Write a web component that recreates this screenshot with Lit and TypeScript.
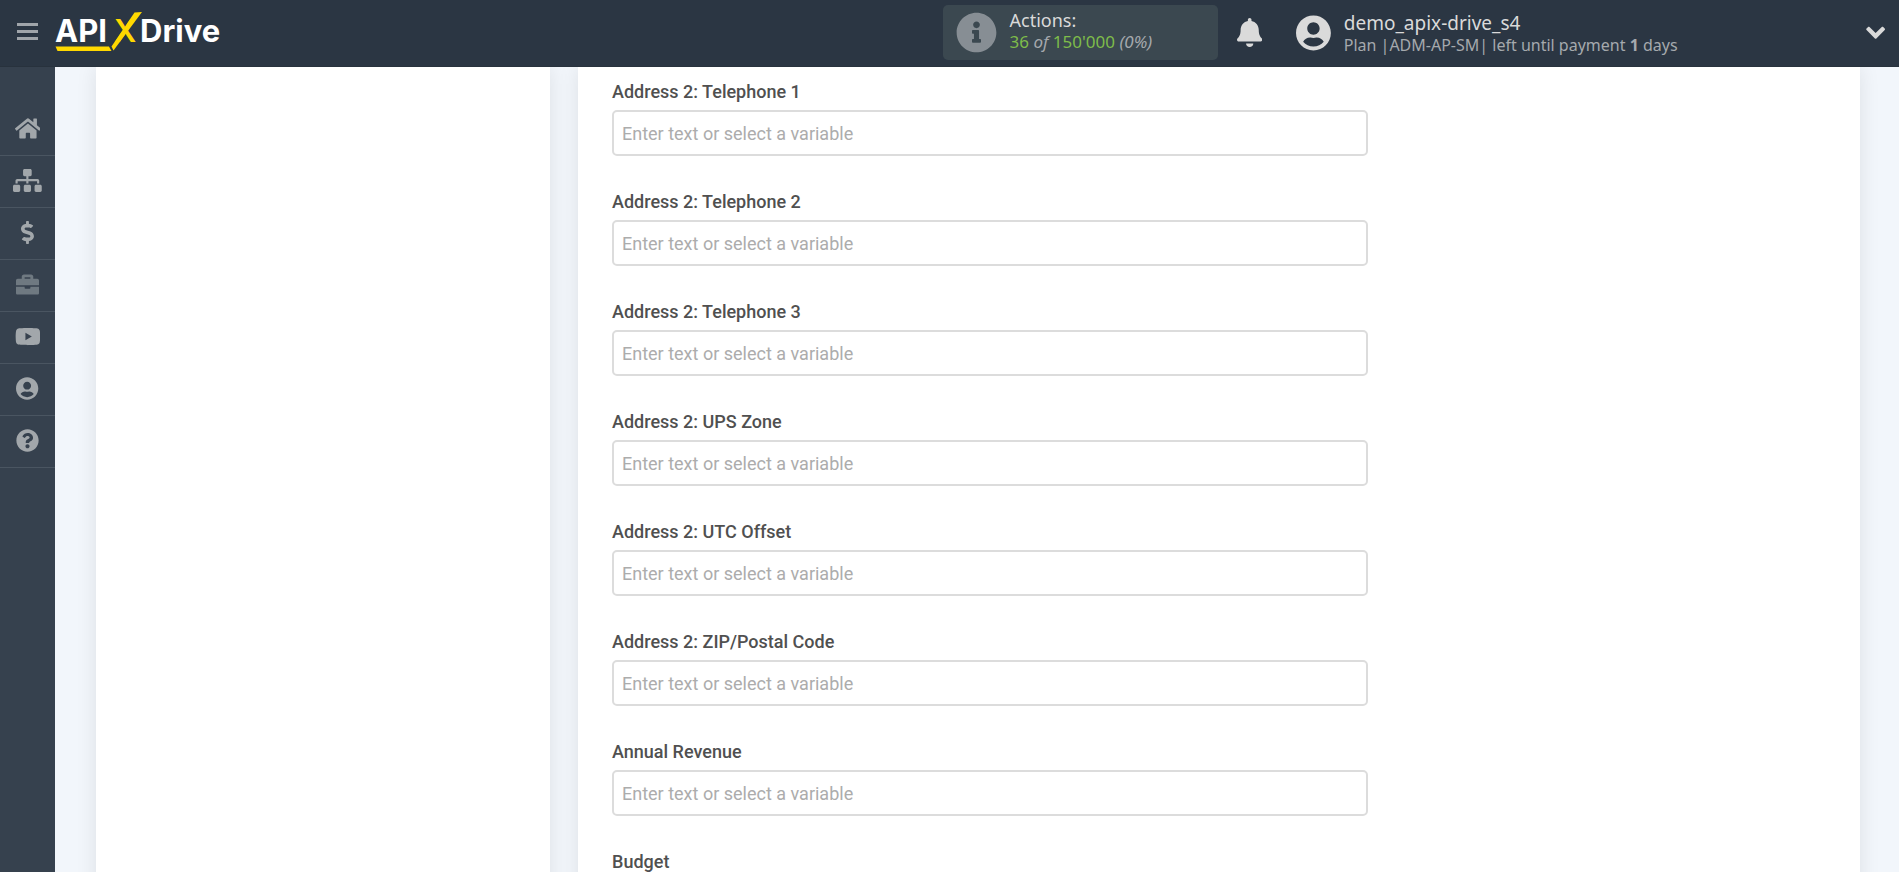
import { LitElement, html, css, svg } from "lit";
import { customElement } from "lit/decorators.js";
import { classMap } from "lit/directives/class-map.js";

interface Glyph {
  width: number;
  path: string;
}

const glyphs: Record<string, Glyph> = {
  home: {
    width: 576,
    path: "M280.37 148.26L96 300.11V464a16 16 0 0 0 16 16l112.06-.29a16 16 0 0 0 15.92-16V368a16 16 0 0 1 16-16h64a16 16 0 0 1 16 16v95.64a16 16 0 0 0 16 16.05L464 480a16 16 0 0 0 16-16V300L295.67 148.26a12.19 12.19 0 0 0-15.3 0zM571.6 251.47L488 182.56V44.05a12 12 0 0 0-12-12h-56a12 12 0 0 0-12 12v72.61L318.47 43a48 48 0 0 0-61 0L4.34 251.47a12 12 0 0 0-1.6 16.9l25.5 31A12 12 0 0 0 45.15 301l235.22-193.74a12.19 12.19 0 0 1 15.3 0L530.9 301a12 12 0 0 0 16.9-1.6l25.5-31a12 12 0 0 0-1.7-16.93z",
  },
  sitemap: {
    width: 640,
    path: "M128 352H32c-17.67 0-32 14.33-32 32v96c0 17.67 14.33 32 32 32h96c17.67 0 32-14.33 32-32v-96c0-17.67-14.33-32-32-32zm-24-80h192v48h48v-48h192v48h48v-57.59c0-21.17-17.23-38.41-38.41-38.41H344v-64h40c17.67 0 32-14.33 32-32V32c0-17.67-14.33-32-32-32H256c-17.67 0-32 14.33-32 32v96c0 17.67 14.33 32 32 32h40v64H94.41C73.23 224 56 241.23 56 262.41V320h48v-48zm264 80h-96c-17.67 0-32 14.33-32 32v96c0 17.67 14.33 32 32 32h96c17.67 0 32-14.33 32-32v-96c0-17.67-14.33-32-32-32zm240 0h-96c-17.67 0-32 14.33-32 32v96c0 17.67 14.33 32 32 32h96c17.67 0 32-14.33 32-32v-96c0-17.67-14.33-32-32-32z",
  },
  dollar: {
    width: 288,
    path: "M209.2 233.4l-108-31.6C88.7 198.2 80 186.5 80 173.5c0-16.3 13.2-29.5 29.5-29.5h66.3c12.2 0 24.2 3.7 34.2 10.5 6.1 4.1 14.3 3.1 19.5-2l34.8-34c7.1-6.9 6.1-18.4-1.8-24.5C238 74.8 207.4 64.1 176 64V16c0-8.8-7.2-16-16-16h-32c-8.8 0-16 7.2-16 16v48h-2.5C45.8 64-5.4 118.7.5 183.6c4.2 46.1 39.4 83.6 83.8 96.6l102.5 30c12.5 3.7 21.2 15.3 21.2 28.3 0 16.3-13.2 29.5-29.5 29.5h-66.3C100 368 88 364.3 78 357.5c-6.1-4.1-14.3-3.1-19.5 2l-34.8 34c-7.1 6.9-6.1 18.4 1.8 24.5 24.5 19.2 55.1 29.9 86.5 30v48c0 8.8 7.2 16 16 16h32c8.8 0 16-7.2 16-16v-48.2c46.6-.9 90.3-28.6 105.7-72.7 21.5-61.6-14.6-124.8-72.5-141.7z",
  },
  briefcase: {
    width: 512,
    path: "M320 336c0 8.84-7.16 16-16 16h-96c-8.84 0-16-7.16-16-16v-32H0v144c0 18 14 32 32 32h448c18 0 32-14 32-32V304H320v32zm152-208h-88V80c0-25.600-22.400-48-48-48H176c-25.600 0-48 22.400-48 48v48H40c-22 0-40 18-40 40v104h512v-104c0-22-18-40-40-40zm-152 0H192V96h128v32z",
  },
  video: {
    width: 576,
    path: "M549.655 124.083c-6.281-23.65-24.787-42.276-48.284-48.597C458.781 64 288 64 288 64S117.22 64 74.629 75.486c-23.497 6.322-42.003 24.947-48.284 48.597-11.412 42.867-11.412 132.305-11.412 132.305s0 89.438 11.412 132.305c6.281 23.65 24.787 41.5 48.284 47.821C117.22 448 288 448 288 448s170.78 0 213.371-11.486c23.497-6.321 42.003-24.171 48.284-47.821 11.412-42.867 11.412-132.305 11.412-132.305s0-89.438-11.412-132.305zM232.145 337.591V175.185l142.739 81.205-142.739 81.201z",
  },
  user: {
    width: 496,
    path: "M248 8C111 8 0 119 0 256s111 248 248 248 248-111 248-248S385 8 248 8zm0 96c48.6 0 88 39.4 88 88s-39.4 88-88 88-88-39.4-88-88 39.4-88 88-88zm0 344c-58.7 0-111.3-26.6-146.5-68.2 18.8-35.4 55.6-59.8 98.5-59.8 2.4 0 4.8.4 7.1 1.1 13 4.2 26.6 6.9 40.9 6.9 14.3 0 28-2.7 40.9-6.9 2.3-.7 4.7-1.1 7.1-1.1 42.9 0 79.7 24.4 98.5 59.8C359.3 421.4 306.7 448 248 448z",
  },
  question: {
    width: 512,
    path: "M504 256c0 136.997-111.043 248-248 248S8 392.997 8 256C8 119.083 119.043 8 256 8s248 111.083 248 248zM262.655 90c-54.497 0-89.255 22.957-116.549 63.758-3.536 5.286-2.353 12.415 2.715 16.258l34.699 26.31c5.205 3.947 12.621 3.008 16.665-2.122 17.864-22.658 30.113-35.797 57.303-35.797 20.429 0 45.698 13.148 45.698 32.958 0 14.976-12.363 22.667-32.534 33.976C247.128 238.528 216 254.941 216 296v4c0 6.627 5.373 12 12 12h56c6.627 0 12-5.373 12-12v-1.333c0-28.462 83.186-29.647 83.186-106.667 0-58.002-60.165-102-116.531-102zM256 338c-25.365 0-46 20.635-46 46 0 25.364 20.635 46 46 46s46-20.636 46-46c0-25.365-20.635-46-46-46z",
  },
  info: {
    width: 512,
    path: "M256 8C119.043 8 8 119.083 8 256c0 136.997 111.043 248 248 248s248-111.003 248-248C504 119.083 392.957 8 256 8zm0 110c23.196 0 42 18.804 42 42s-18.804 42-42 42-42-18.804-42-42 18.804-42 42-42zm56 254c0 6.627-5.373 12-12 12h-88c-6.627 0-12-5.373-12-12v-24c0-6.627 5.373-12 12-12h12v-64h-12c-6.627 0-12-5.373-12-12v-24c0-6.627 5.373-12 12-12h64c6.627 0 12 5.373 12 12v100h12c6.627 0 12 5.373 12 12v24z",
  },
  bell: {
    width: 448,
    path: "M224 512c35.32 0 63.97-28.65 63.97-64H160.03c0 35.35 28.65 64 63.97 64zm215.39-149.71c-19.32-20.76-55.47-51.99-55.47-154.29 0-77.7-54.48-139.9-127.94-155.16V32c0-17.67-14.32-32-31.98-32s-31.98 14.33-31.98 32v20.84C118.56 68.1 64.08 130.3 64.08 208c0 102.3-36.15 133.53-55.47 154.29-6 6.45-8.66 14.16-8.61 21.71.11 16.4 12.98 32 32.1 32h383.8c19.12 0 32-15.6 32.1-32 .05-7.55-2.61-15.27-8.61-21.71z",
  },
  chevron: {
    width: 448,
    path: "M207.029 381.476L12.686 187.132c-9.373-9.373-9.373-24.569 0-33.941l34.667-34.667c9.357-9.357 24.522-9.375 33.901-.04L224 258.505l142.745-140.021c9.379-9.335 24.544-9.317 33.901.04l34.667 34.667c9.373 9.373 9.373 24.569 0 33.941L240.971 381.476c-9.373 9.372-24.569 9.372-33.942 0z",
  },
};

const icon = (name: string) => html`
  <svg class="icon" viewBox="0 0 ${glyphs[name].width} 512" aria-hidden="true">
    ${svg`<path fill="currentColor" d=${glyphs[name].path}></path>`}
  </svg>
`;

const iconStyles = css`
  .icon {
    display: block;
    height: 1em;
    width: auto;
  }
`;

@customElement("app-header")
class AppHeader extends LitElement {
  static styles = [
    iconStyles,
    css`
      :host {
        box-sizing: border-box;
        display: grid;
        grid-template-columns: minmax(0, 1fr) minmax(0, 1fr);
        align-items: center;
        height: 67px;
        padding: 0 14px 2px 0;
        box-shadow: inset 0 -1px #28323d;
        background: #2b3643;
        color: #dadada;
        font-family: "Noto Sans", "Open Sans", sans-serif;
      }
      button {
        padding: 0;
        border: 0;
        background: none;
        color: inherit;
        font: inherit;
        text-align: left;
        cursor: pointer;
      }
      .brand,
      .tools,
      .account {
        display: flex;
        align-items: center;
      }
      .brand {
        padding-left: 17px;
        gap: 17px;
      }
      .burger {
        display: grid;
        gap: 4px;
        width: 21px;
        margin-bottom: 2px;
        color: #a0a5aa;
      }
      .bar {
        height: 3px;
        background: currentColor;
      }
      .logo {
        display: block;
      }
      .letters {
        font: 700 31px Inter, sans-serif;
      }
      .cross {
        font: 600 31px Inter, sans-serif;
      }
      .actions {
        box-sizing: border-box;
        display: flex;
        align-items: center;
        gap: 13px;
        flex: 0 0 275px;
        height: 55px;
        padding-left: 13px;
        border-radius: 5px;
        background: #3b4850;
      }
      .actions .lines {
        padding-bottom: 3px;
      }
      .info {
        color: #878e94;
        font-size: 41px;
      }
      .lines {
        display: block;
      }
      .title {
        display: block;
        font-size: 18px;
        line-height: 22px;
      }
      .detail {
        display: block;
        font-size: 17px;
        line-height: 22px;
        color: #a5a9ad;
      }
      .count {
        color: #7ebc4a;
      }
      .bell {
        margin-left: 19px;
        font-size: 29px;
      }
      .account {
        margin-left: 34px;
        gap: 13px;
        flex: 1;
        min-width: 0;
        white-space: nowrap;
      }
      .account .lines {
        padding-top: 2px;
      }
      .account .title {
        font-size: 19px;
      }
      .account .detail {
        font-size: 16px;
      }
      .avatar {
        font-size: 36px;
      }
      .chevron {
        font-size: 22px;
      }
      .grow {
        flex: 1;
      }
    `,
  ];

  render() {
    return html`
      <div class="brand">
        <button class="burger" aria-label="Menu">
          <span class="bar"></span><span class="bar"></span><span class="bar"></span>
        </button>
        <a href="#" aria-label="APIXDrive">
          <svg class="logo" width="170" height="44" viewBox="0 0 170 44">
            <text class="letters" x="0" y="31" fill="#fff">API</text>
            <text class="cross" x="59" y="31" fill="#ffd800">X</text>
            <text class="letters" x="85" y="31" fill="#fff">Drive</text>
            <path fill="#ffd800" d="M79.500 1.500L87 1L58.500 39.500L56.500 35.500Z"></path>
            <path fill="#ffd800" d="M0.500 35.500H54L56.500 40H2.500Z"></path>
          </svg>
        </a>
      </div>
      <div class="tools">
        <button class="actions">
          <span class="info">${icon("info")}</span>
          <span class="lines">
            <span class="title">Actions:</span>
            <span class="detail"
              ><span class="count">36</span> <em>of</em> <span class="count">150'000</span> <em>(0%)</em></span
            >
          </span>
        </button>
        <button class="bell" aria-label="Notifications">${icon("bell")}</button>
        <button class="account">
          <span class="avatar">${icon("user")}</span>
          <span class="lines">
            <span class="title">demo_apix-drive_s4</span>
            <span class="detail">Plan |ADM-AP-SM| left until payment <b>1</b> days</span>
          </span>
          <span class="grow"></span>
          <span class="chevron">${icon("chevron")}</span>
        </button>
      </div>
    `;
  }
}

@customElement("app-sidebar")
class AppSidebar extends LitElement {
  static styles = [
    iconStyles,
    css`
      :host {
        box-sizing: border-box;
        display: block;
        padding-top: 37px;
        background: #36414e;
      }
      .item {
        box-sizing: border-box;
        display: grid;
        place-items: center;
        height: 52px;
        padding-bottom: 2px;
        border-bottom: 1px solid #4a5561;
        color: #a2a7ab;
        font-size: 23px;
      }
      .dim {
        color: #6f7981;
      }
    `,
  ];

  private items = [
    { icon: "home", label: "Home" },
    { icon: "sitemap", label: "Connections" },
    { icon: "dollar", label: "Billing" },
    { icon: "briefcase", label: "Business", dim: true },
    { icon: "video", label: "Video" },
    { icon: "user", label: "Profile" },
    { icon: "question", label: "Help" },
  ];

  render() {
    return html`
      <nav>
        ${this.items.map(
          (item) => html`
            <a class=${classMap({ item: true, dim: !!item.dim })} href="#" aria-label=${item.label}>
              ${icon(item.icon)}
            </a>
          `
        )}
      </nav>
    `;
  }
}

@customElement("variable-fields")
class VariableFields extends LitElement {
  static styles = css`
    :host {
      display: block;
    }
    .fields {
      display: grid;
      gap: 34px;
      max-width: 756px;
    }
    .field {
      display: grid;
      gap: 6px;
    }
    .label {
      color: #505050;
      font-size: 18px;
      font-weight: 500;
      line-height: 24px;
    }
    .input {
      box-sizing: border-box;
      width: 100%;
      height: 46px;
      padding: 0 8px;
      border: 2px solid #dcdcdc;
      border-radius: 5px;
      background: #fff;
      color: #505050;
      font: inherit;
      font-size: 18px;
    }
    .input::placeholder {
      color: #acacac;
      opacity: 1;
    }
  `;

  private names = [
    "Address 2: Telephone 1",
    "Address 2: Telephone 2",
    "Address 2: Telephone 3",
    "Address 2: UPS Zone",
    "Address 2: UTC Offset",
    "Address 2: ZIP/Postal Code",
    "Annual Revenue",
    "Budget",
  ];

  render() {
    return html`
      <form class="fields">
        ${this.names.map(
          (name, i) => html`
            <div class="field">
              <label class="label" for="field-${i}">${name}</label>
              <input class="input" id="field-${i}" type="text" placeholder="Enter text or select a variable" />
            </div>
          `
        )}
      </form>
    `;
  }
}

@customElement("app-root")
class AppRoot extends LitElement {
  static styles = css`
    :host {
      display: grid;
      grid-template: auto minmax(0, 1fr) / 55px minmax(0, 1fr);
      height: 100vh;
      overflow: hidden;
      background: #f2f6fb;
      font-family: Roboto, sans-serif;
    }
    .header {
      grid-column: 1 / -1;
      z-index: 1;
    }
    .sidebar {
      z-index: 1;
    }
    .main {
      display: grid;
      grid-template-columns: minmax(0, 17fr) minmax(0, 48fr);
      gap: 28px;
      padding: 0 39px 0 41px;
      overflow: hidden;
    }
    .card {
      background: #fff;
      box-shadow: 0 0 20px rgba(0, 0, 0, 0.09);
    }
    .form {
      padding: 13px 34px;
    }
  `;

  render() {
    return html`
      <app-header class="header"></app-header>
      <app-sidebar class="sidebar"></app-sidebar>
      <main class="main">
        <section class="card"></section>
        <section class="card form"><variable-fields></variable-fields></section>
      </main>
    `;
  }
}
